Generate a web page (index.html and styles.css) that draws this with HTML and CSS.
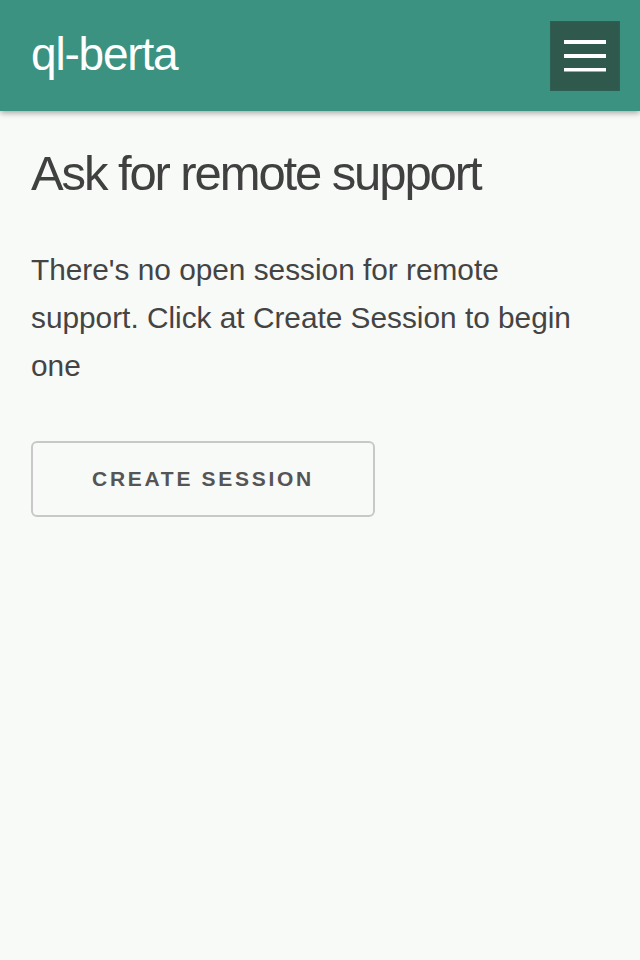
FILE: index.html
```html
<!DOCTYPE html>
<html>
<head>
<meta charset="utf-8">
<link rel="stylesheet" href="styles.css">
</head>
<body>
<header class="topbar">
  <div class="brand">ql-berta</div>
  <button class="menu-btn" aria-label="Menu">
    <svg width="42" height="32" viewBox="0 0 42 32"><rect x="0" y="0" width="42" height="4" fill="#fff"/><rect x="0" y="14" width="42" height="4" fill="#fff"/><rect x="0" y="28" width="42" height="3.5" fill="#fff"/></svg>
  </button>
</header>
<main class="content">
  <h1 class="title">Ask for remote support</h1>
  <p class="text">There's no open session for remote support. Click at Create Session to begin one</p>
  <button class="create-btn">CREATE SESSION</button>
</main>
</body>
</html>
```
FILE: styles.css
```css
html, body { margin: 0; padding: 0; }
body {
  background: #f8faf8;
  font-family: "Liberation Sans", Arial, sans-serif;
  color: #444;
  width: 640px;
  height: 960px;
  overflow: hidden;
}
.topbar {
  height: 111px;
  background: #3b9280;
  display: flex;
  align-items: center;
  justify-content: space-between;
  padding: 0 20px 0 31px;
  box-sizing: border-box;
  box-shadow: 0 2px 6px rgba(0,0,0,0.35);
}
.brand {
  color: #fff;
  font-size: 46px;
  letter-spacing: -1.2px;
  line-height: 52px;
  height: 52px;
  margin-top: -4px;
}
.menu-btn {
  width: 70px;
  height: 70px;
  background: #30594e;
  border: 1px solid #2f5f52;
  display: flex;
  align-items: center;
  justify-content: center;
  padding: 0;
  box-sizing: border-box;
}
.content {
  padding: 33px 31px;
}
.title {
  margin: 0;
  font-weight: normal;
  font-size: 49px;
  letter-spacing: -2.1px;
  color: #404040;
  line-height: 59px;
}
.text {
  margin: 43px 0 0;
  font-size: 29.8px;
  line-height: 48px;
  color: #444;
  max-width: 578px;
}
.create-btn {
  margin-top: 51px;
  width: 344px;
  height: 76px;
  background: transparent;
  border: 2px solid #c8c8c8;
  border-radius: 6px;
  font-family: "Liberation Sans", Arial, sans-serif;
  font-weight: bold;
  font-size: 21px;
  letter-spacing: 2.7px;
  color: #555;
  padding: 0;
}
```
